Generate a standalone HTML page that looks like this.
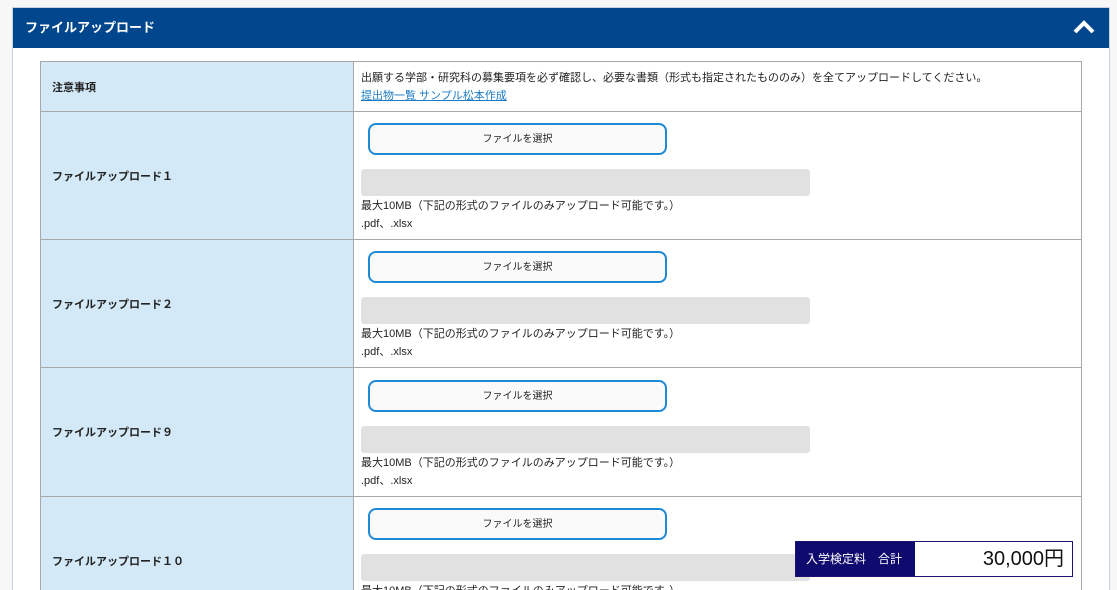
<!DOCTYPE html>
<html><head><meta charset="utf-8"><style>
*{margin:0;padding:0;box-sizing:border-box}
html,body{width:1117px;height:590px;overflow:hidden}
body{background:#f7f7f7;font-family:"Liberation Sans","Noto Sans CJK JP",sans-serif;font-size:11px;color:#222;position:relative}
.panel{position:absolute;left:12px;top:7px;width:1098px;height:583px;overflow:hidden;background:#fff;border:1px solid #c9d3e0;border-bottom:none}
.hd{height:40px;background:#00468c;color:#fff;font-weight:bold;font-size:13px;line-height:40px;padding-left:12px;position:relative}
.hd svg{position:absolute;right:14px;top:12px}
table{position:absolute;left:27px;top:53px;width:1042px;border-collapse:collapse}
td{border:1px solid #a8a8a8;vertical-align:middle}
td.l{width:313px;background:#d3e9f7;font-weight:bold;padding-left:11px;font-size:11px}
td.r{padding-left:7px}
.btn{margin-left:7px;margin-top:5px;width:299px;height:32px;border:2px solid #1e8ad6;border-radius:8px;background:#fafafa;text-align:center;line-height:30px;font-size:10px}
.bar{width:449px;height:27px;background:#e1e1e1;border-radius:3px;margin-top:14px}
.t{line-height:18px;font-size:11px}
.bar+.t{margin-top:1px}
a{color:#1a7bc4;text-decoration:underline}
.fee{position:absolute;left:795px;top:541px;width:278px;height:36px;border:1px solid #1a1470;display:flex;background:#fff}
.fee .a{width:119px;background:#0f0a6e;color:#fff;font-size:12px;line-height:34px;padding-left:10px}
.fee .b{flex:1;text-align:right;padding-right:8px;font-size:20px;line-height:34px;color:#111}
</style></head><body>
<div class="panel">
<div class="hd">ファイルアップロード<svg width="22" height="14" viewBox="0 0 22 14"><path d="M2 12 L11 3 L20 12" stroke="#fff" stroke-width="4" fill="none"/></svg></div>
<table>
<tr style="height:50px"><td class="l">注意事項</td><td class="r"><div class="t">出願する学部・研究科の募集要項を必ず確認し、必要な書類（形式も指定されたもののみ）を全てアップロードしてください。</div><div class="t"><a>提出物一覧 サンプル松本作成</a></div></td></tr>
<tr style="height:128px"><td class="l">ファイルアップロード１</td><td class="r"><div class="btn">ファイルを選択</div><div class="bar"></div><div class="t">最大10MB（下記の形式のファイルのみアップロード可能です。）</div><div class="t">.pdf、.xlsx</div></td></tr>
<tr style="height:128px"><td class="l">ファイルアップロード２</td><td class="r"><div class="btn">ファイルを選択</div><div class="bar"></div><div class="t">最大10MB（下記の形式のファイルのみアップロード可能です。）</div><div class="t">.pdf、.xlsx</div></td></tr>
<tr style="height:129px"><td class="l">ファイルアップロード９</td><td class="r"><div class="btn">ファイルを選択</div><div class="bar"></div><div class="t">最大10MB（下記の形式のファイルのみアップロード可能です。）</div><div class="t">.pdf、.xlsx</div></td></tr>
<tr style="height:128px"><td class="l">ファイルアップロード１０</td><td class="r"><div class="btn">ファイルを選択</div><div class="bar"></div><div class="t">最大10MB（下記の形式のファイルのみアップロード可能です。）</div><div class="t">.pdf、.xlsx</div></td></tr>
</table>
</div>
<div class="fee"><div class="a">入学検定料　合計</div><div class="b">30,000円</div></div>
</body></html>
